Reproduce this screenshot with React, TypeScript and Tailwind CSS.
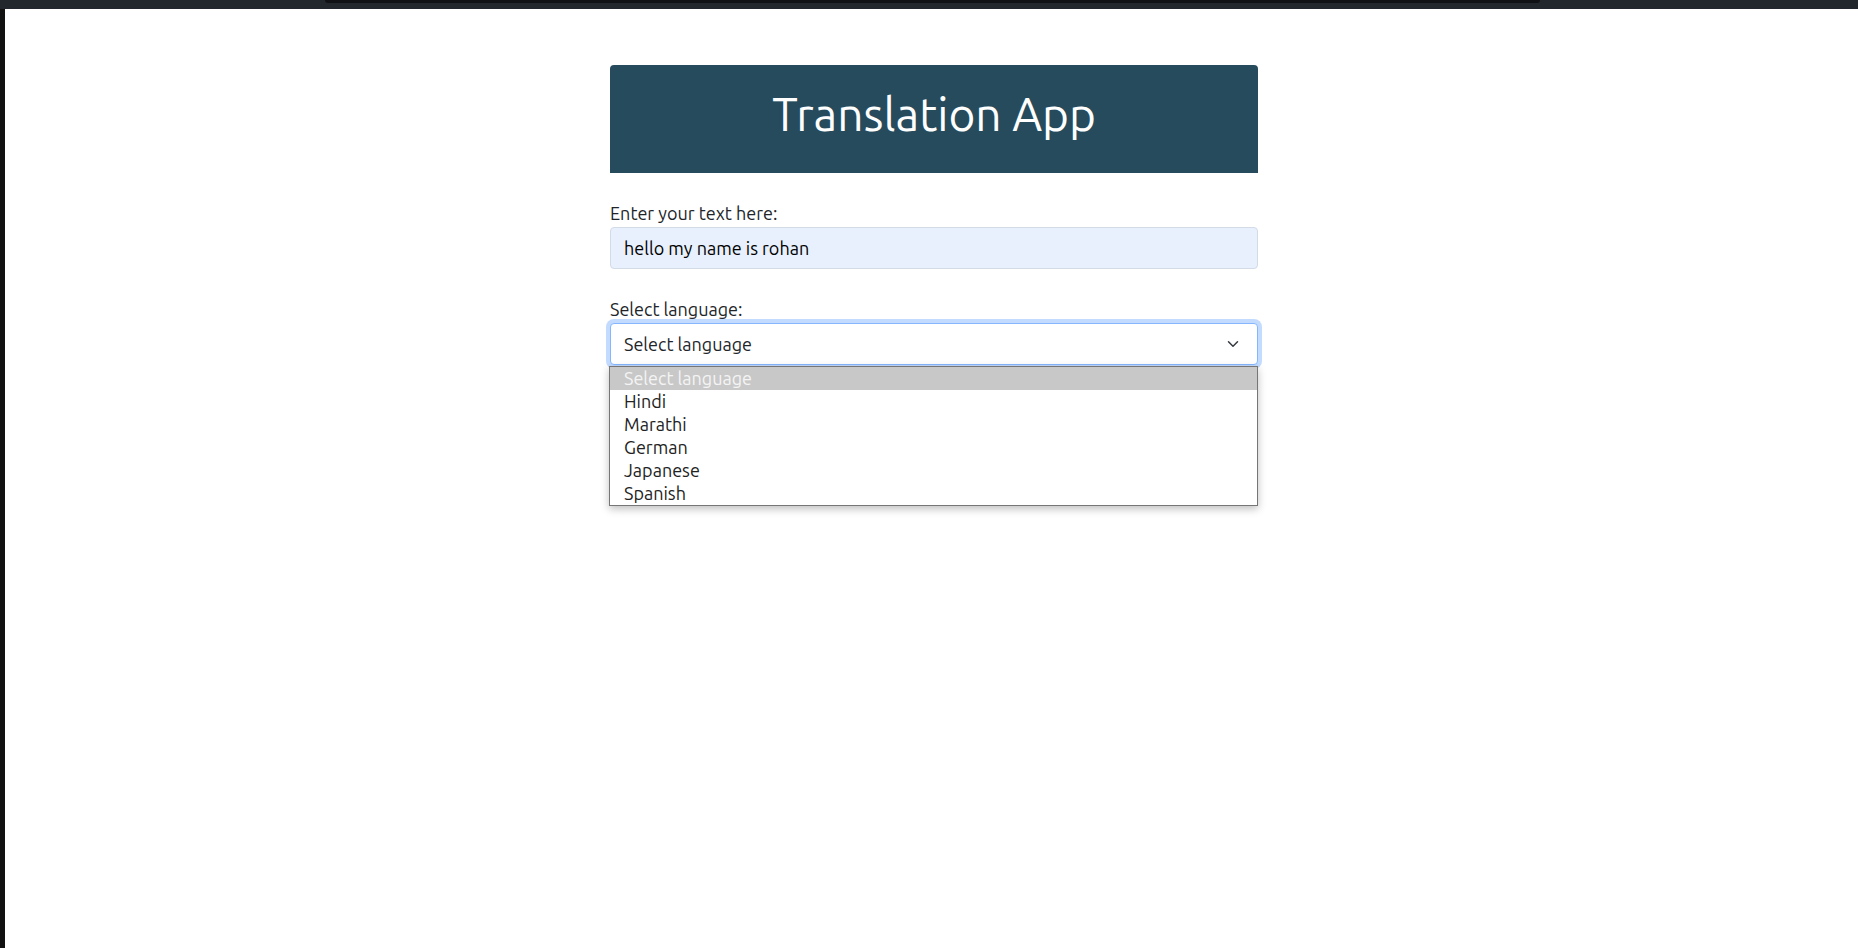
import React from "react";

export default function App() {
  const items = ["Select language", "Hindi", "Marathi", "German", "Japanese", "Spanish"];
  return (
    <div className="w-[1858px] h-[948px] overflow-hidden bg-white flex flex-col font-['Ubuntu','Open_Sans',sans-serif] text-[#212529]">
      <div className="h-[9px] bg-[#22272d] relative shrink-0">
        <div className="absolute left-[325px] top-0 w-[1215px] h-[3px] bg-[#0f1115] rounded-b-[6px]" />
      </div>
      <div className="flex flex-1">
        <div className="w-[5px] bg-[#111111] shrink-0" />
        <div className="flex-1 flex flex-col">
          <div className="w-[648px] ml-[605px] mt-[56px]">
            <div className="h-[108px] bg-[#264b5d] rounded-t-[4px] flex items-center justify-center pb-[10px]">
              <h1 className="text-[46px] font-normal text-white leading-none">Translation App</h1>
            </div>
            <div className="mt-[27px]">
              <label className="block text-[18px] leading-[26px] mb-[1px]">Enter your text here:</label>
              <div className="h-[42px] bg-[#e8f0fe] border border-[#d3dbe6] rounded-[4px] flex items-center px-[13px] text-[18px] text-black">
                hello my name is rohan
              </div>
            </div>
            <div className="mt-[27px]">
              <label className="block text-[18px] leading-[26px] mb-[1px]">Select language:</label>
              <div className="relative">
                <div className="h-[42px] bg-white border border-[#86b7fe] rounded-[4px] shadow-[0_0_0_4px_rgba(13,110,253,0.25)] flex items-center justify-between px-[13px] text-[18px]">
                  <span>Select language</span>
                  <svg width="16" height="12" viewBox="0 0 16 16" className="mr-[3px]">
                    <path d="m2 5 6 6 6-6" fill="none" stroke="#343a40" strokeWidth="2" strokeLinecap="round" strokeLinejoin="round" />
                  </svg>
                </div>
                <div className="absolute left-[-1px] top-[43px] w-[649px] bg-white border border-[#767676] shadow-[0_3px_8px_rgba(0,0,0,0.25)] z-10">
                  {items.map((it, i) => (
                    <div
                      key={it}
                      className={
                        i === 0
                          ? "h-[23px] leading-[22px] pl-[14px] text-[18px] bg-[#c8c8c8] text-[#f4f4f4]"
                          : "h-[23px] leading-[22px] pl-[14px] text-[18px] text-[#222]"
                      }
                    >
                      {it}
                    </div>
                  ))}
                </div>
              </div>
            </div>
          </div>
        </div>
      </div>
    </div>
  );
}
